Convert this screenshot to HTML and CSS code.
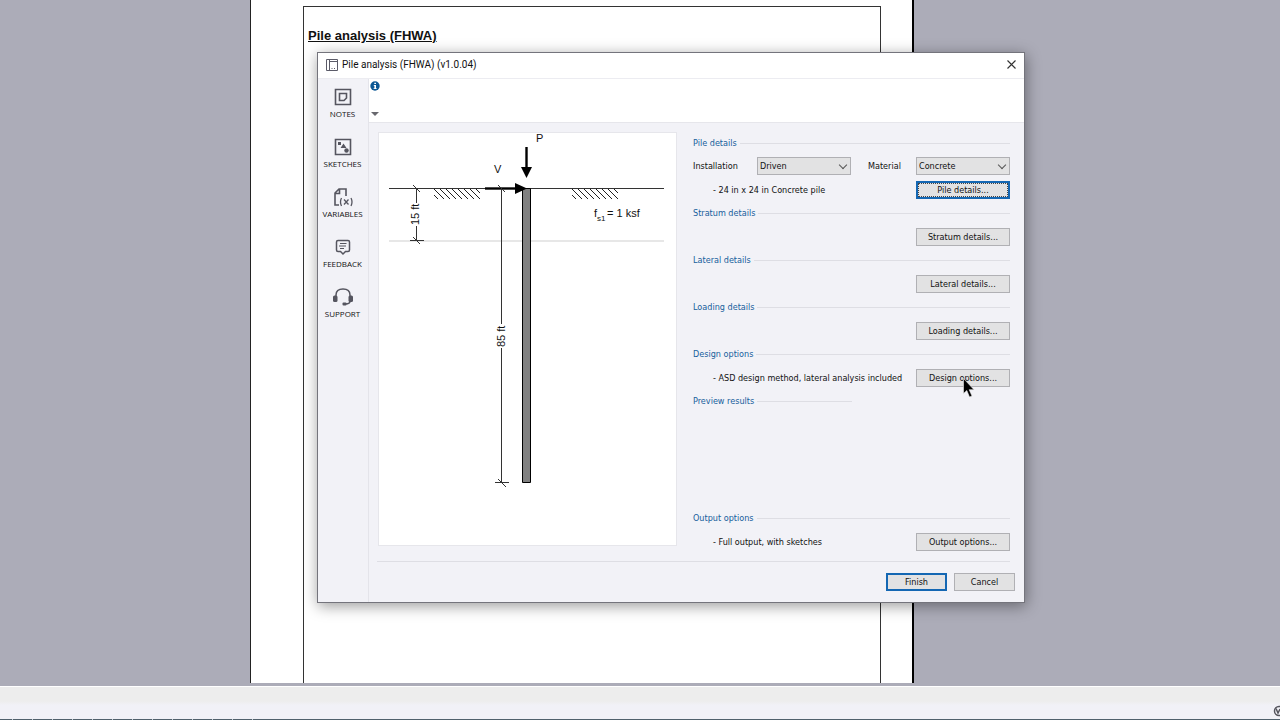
FILE: index.html
```html
<!DOCTYPE html>
<html lang="en">
<head>
<meta charset="utf-8">
<title>Pile analysis (FHWA)</title>
<link rel="stylesheet" href="styles.css">
</head>
<body>
<main class="workspace">
  <article class="paper">
    <div class="frame"><h1 class="paper-title">Pile analysis (FHWA)</h1></div>
  </article>
</main>
<footer class="status">
  <svg class="status-icon" width="7" height="12" viewBox="0 0 7 12"><circle cx="6" cy="6" r="4.5" fill="none" stroke="#55555d" stroke-width="1.5"/><path d="M3 3.500l2 4.500 2-4" fill="none" stroke="#55555d" stroke-width="1.5"/></svg>
  <div class="ticks"></div>
</footer>

<section class="dialog" role="dialog" aria-labelledby="dialog-title">
  <header class="titlebar">
    <svg width="12" height="12" viewBox="0 0 12 12" fill="none" stroke="#5b5b68"><path d="M.5 .5h11v11H.5zM3.500 .5v11M3.500 2.500h8"/><path d="M5.500 9.500h1M8 9.500h1"/></svg>
    <h2 class="title" id="dialog-title">Pile analysis (FHWA) (v1.0.04)</h2>
    <button class="close" aria-label="Close"><svg width="9" height="9" viewBox="0 0 9 9"><path d="M.5 .5l8 8M8.500 .5l-8 8" stroke="#333" stroke-width="1.100"/></svg></button>
  </header>
  <div class="body">
    <nav class="side">
      <button class="tool">
        <svg width="20" height="20" viewBox="0 0 20 20" fill="none" stroke="#55555f" stroke-width="1.600"><path d="M2.500 2.500h15v15h-15z"/><path d="M6.500 6.500h7v4.500l-2.500 2.500H6.500z"/></svg>
        <span>NOTES</span></button>
      <button class="tool">
        <svg width="20" height="20" viewBox="0 0 20 20" fill="none" stroke="#55555f" stroke-width="1.600"><path d="M2.500 2.500h15v15h-15z"/><g fill="#55555f" stroke="none"><path d="M5 5h3v3H5zM10.500 6.500l3 4.500h-6z"/><circle cx="13.500" cy="13.500" r="2.200"/></g></svg>
        <span>SKETCHES</span></button>
      <button class="tool">
        <svg width="20" height="20" viewBox="0 0 20 20" fill="none" stroke="#55555f" stroke-width="1.600"><path d="M6 18H2V6l4-4h7v7M6.500 2v4.500H2"/><path stroke-width="1.300" d="M8.500 11Q6.500 15 8.500 19M18 11Q20 15 18 19M11 12.500l4.500 5M15.500 12.500l-4.500 5"/></svg>
        <span>VARIABLES</span></button>
      <button class="tool">
        <svg width="20" height="20" viewBox="0 0 20 20" fill="none" stroke="#55555f" stroke-width="1.500"><path d="M5 3.500h10q1.500 0 1.500 1.500v8q0 1.500-1.500 1.500h-2.500L10 17l-2.500-2.500H5q-1.500 0-1.500-1.500V5q0-1.500 1.500-1.500z"/><path stroke-width="1.200" d="M7 6.500h6.500M6 9h7M7 11.500h4"/></svg>
        <span>FEEDBACK</span></button>
      <button class="tool">
        <svg width="20" height="20" viewBox="0 0 20 20" fill="none" stroke="#55555f" stroke-width="1.500"><path d="M3 10V8q0-6 7-6t7 6v2M17 14q0 3-4.500 3"/><g fill="#55555f" stroke="none"><rect x="0" y="8.500" width="4.500" height="6.500" rx="1.500"/><rect x="15.500" y="8.500" width="4.500" height="6.500" rx="1.500"/><rect x="9.500" y="15.500" width="4" height="3" rx="1"/></g></svg>
        <span>SUPPORT</span></button>
    </nav>
    <div class="main">
      <div class="info">
        <svg width="10" height="10" viewBox="0 0 10 10"><circle cx="5" cy="5" r="4.700" fill="#0b5794"/><path d="M4.300 1.800h1.700v1.300H4.300zM3.800 4h2.200v3.200h.700v.9H3.600v-.9h.8V4.900h-.6z" fill="#fff"/></svg>
        <svg width="10" height="4" viewBox="0 0 10 4"><path d="M1 0h8L5 4z" fill="#68686e"/></svg>
      </div>
      <div class="content">
        <div class="sketch">
          <svg class="drawing" viewBox="378 132 299 414" preserveAspectRatio="xMidYMin meet" role="img" aria-label="Pile sketch">
            <defs><path id="hatch" d="M0 6l4 4M0 0l10 10M6 0l10 10M12 0l10 10M18 0l10 10M24 0l10 10M30 0l10 10M36 0l10 10M42 0l4 4" fill="none" stroke="#222"/></defs>
            <path d="M389 241h275" stroke="#cfcfcf"/>
            <path d="M389 188.500h275" stroke="#333"/>
            <use href="#hatch" x="434" y="189"/><use href="#hatch" x="572" y="189"/>
            <path d="M522.500 188.500h8v294h-8z" fill="#808080" stroke="#000"/>
            <path d="M485 188.500h32" stroke="#000" stroke-width="2.400"/><path d="M515 183l12 5.500-12 5.500z"/>
            <path d="M526.500 147v22" stroke="#000" stroke-width="2.400"/><path d="M521 167h11l-5.500 11z"/>
            <path d="M501.500 189v135M501.500 348v135M495 482.500h14M498 479l8 8M498 185l7 7M416.500 189v14M416.500 226v15M410 240.500h14M413 237l7 7M413 185l7 7" fill="none" stroke="#333"/>
            <g class="drawing-text">
              <text x="536" y="142">P</text><text x="494" y="173">V</text>
              <text x="594" y="217">f</text><text class="sub" x="597" y="221">s1</text><text x="607" y="217">= 1 ksf</text>
              <text transform="translate(419 225) rotate(-90)">15 ft</text>
              <text transform="translate(505 347) rotate(-90)">85 ft</text>
            </g>
          </svg>
        </div>
        <form class="form">
          <section class="group">
            <h3 class="head">Pile details</h3>
            <div class="row fields">
              <label class="field-label" for="installation">Installation</label>
              <span class="pick"><select id="installation"><option>Driven</option></select></span>
              <label class="field-label material" for="material">Material</label>
              <span class="pick"><select id="material"><option>Concrete</option></select></span>
            </div>
            <div class="row short"><p class="note">- 24 in x 24 in Concrete pile</p><button type="button" class="btn wide focused">Pile details...</button></div>
          </section>
          <section class="group">
            <h3 class="head">Stratum details</h3>
            <div class="row"><button type="button" class="btn wide">Stratum details...</button></div>
          </section>
          <section class="group">
            <h3 class="head">Lateral details</h3>
            <div class="row"><button type="button" class="btn wide">Lateral details...</button></div>
          </section>
          <section class="group">
            <h3 class="head">Loading details</h3>
            <div class="row"><button type="button" class="btn wide">Loading details...</button></div>
          </section>
          <section class="group">
            <h3 class="head">Design options</h3>
            <div class="row"><p class="note">- ASD design method, lateral analysis included</p><button type="button" class="btn wide">Design options...</button></div>
          </section>
          <section class="group preview">
            <h3 class="head half">Preview results</h3>
          </section>
          <section class="group">
            <h3 class="head">Output options</h3>
            <div class="row"><p class="note">- Full output, with sketches</p><button type="button" class="btn wide">Output options...</button></div>
          </section>
        </form>
      </div>
      <footer class="actions">
        <button class="btn default">Finish</button>
        <button class="btn">Cancel</button>
      </footer>
    </div>
  </div>
</section>
<svg class="pointer" width="12" height="20" viewBox="0 0 12 20"><path d="M.5 .5v15l3.300-3 2.700 6.500 2.500-1-2.800-6.300h4.800z" fill="#000" stroke="#e9e9e9" stroke-width=".6"/></svg>
</body>
</html>
```
FILE: styles.css
```css
* { box-sizing: border-box; }

body {
  margin: 0;
  min-height: 100vh;
  display: flex;
  flex-direction: column;
  position: relative;
  overflow: hidden;
  background: #acacb8;
  font: 9px/14px "DejaVu Sans Condensed", "DejaVu Sans", sans-serif;
  font-stretch: condensed;
  color: #111;
}

h1, h2, h3, p { margin: 0; font-weight: normal; }
svg { display: block; flex: none; }
button, select { font: inherit; color: inherit; }

.workspace {
  flex: 1;
  display: flex;
  padding: 0 366px 3px 250px;
}

.paper {
  flex: 1;
  display: flex;
  padding: 6px 31px 0 52px;
  background: #fff;
  border-left: 1px solid #222;
  border-right: 2px solid #000;
}

.frame {
  flex: 1;
  padding: 20px 4px;
  border: 1px solid #333;
  border-bottom: 0;
}

.paper-title {
  font: bold 13px/18px "Liberation Sans", Arial, sans-serif;
  text-decoration: underline;
  color: #111;
}

.status {
  height: 34px;
  display: flex;
  flex-direction: column;
  justify-content: flex-end;
  align-items: flex-end;
  border-top: 1px solid #fff;
  background: linear-gradient(#ededed 14px, #f1f1f7 18px);
}

.status-icon { margin-bottom: 2px; }

.ticks {
  align-self: stretch;
  height: 1px;
  background: repeating-linear-gradient(90deg, #4f606c 0 12px, #c3cbd1 12px 13px, #4f606c 13px 20px) 0 0 / 260px 1px no-repeat #4f606c;
}

.dialog {
  position: absolute;
  left: 317px;
  right: 255px;
  top: 52px;
  display: flex;
  flex-direction: column;
  min-height: 550px;
  border: 1px solid #74747c;
  background: #f2f2f7;
  box-shadow: 1px 3px 14px rgba(0, 0, 0, .4);
}

.titlebar {
  height: 26px;
  display: flex;
  align-items: center;
  gap: 4px;
  padding: 0 8px 2px;
  border-bottom: 1px solid #ececf1;
  background: #fff;
}

.title { font: 10px/16px Roboto, "Open Sans", sans-serif; flex: 1; }

.close {
  padding: 0;
  border: 0;
  background: none;
}

.body { flex: 1; display: flex; }

.side {
  width: 51px;
  display: flex;
  flex-direction: column;
  gap: 16px;
  padding: 8px 1px 0 0;
  border-right: 1px solid #e4e4ea;
}

.tool {
  display: flex;
  flex-direction: column;
  align-items: center;
  padding: 0;
  border: 0;
  background: none;
  font: 8px/14px "Open Sans", "Noto Sans", sans-serif;
}

.main { flex: 1; display: flex; flex-direction: column; }

.info {
  height: 44px;
  display: flex;
  flex-direction: column;
  justify-content: space-between;
  padding: 2px 1px 6px;
  border-bottom: 1px solid #e6e6eb;
  background: #fff;
}

.content {
  flex: 1;
  display: flex;
  gap: 16px;
  margin: 0 14px 0 8px;
  padding: 9px 0 4px 1px;
  border-bottom: 1px solid #dedee4;
}

.sketch {
  flex: 1;
  display: flex;
  margin-bottom: 11px;
  border: 1px solid #e6e6eb;
  background: #fff;
}

.drawing { flex: 1; width: 100%; margin: -1px; }
.drawing-text { font: 11px "Liberation Sans", Arial, sans-serif; fill: #111; }
.sub { font-size: 8px; }

.form {
  width: 317px;
  display: flex;
  flex-direction: column;
  padding-top: 3px;
}

.preview { flex: 1; }

.head {
  display: flex;
  align-items: center;
  gap: 3px;
  font-size: 9px;
  line-height: 16px;
  color: #17609c;
}

.head::after {
  content: "";
  flex: 1;
  height: 1px;
  background: #dedee4;
}

.half { width: 50%; }

.row {
  display: flex;
  align-items: center;
  justify-content: flex-end;
  height: 31px;
}

.short { height: 30px; }
.fields { height: 24px; align-items: flex-end; }
.field-label { line-height: 18px; flex: 1; }
.material { flex: none; width: 65px; padding-left: 17px; }
.note { flex: 1; padding-left: 20px; }

.pick { display: flex; position: relative; }

.pick::after {
  content: "";
  position: absolute;
  right: 5px;
  top: 5px;
  width: 5px;
  height: 5px;
  border: solid #555;
  border-width: 0 1px 1px 0;
  transform: rotate(45deg);
  pointer-events: none;
}

select {
  appearance: none;
  width: 94px;
  height: 18px;
  padding: 0 2px;
  border: 1px solid #b0b0b4;
  border-radius: 0;
  background: #e2e2e3;
}

.btn {
  width: 61px;
  height: 18px;
  padding: 0;
  border: 1px solid #b0b0b4;
  background: #e2e2e3;
}

.wide { width: 94px; }
.default, .focused { border: 2px solid #1467b3; }
.focused { outline: 1px dotted #444; outline-offset: -3px; }

.actions {
  height: 40px;
  display: flex;
  align-items: center;
  justify-content: flex-end;
  gap: 7px;
  padding-right: 9px;
}

.pointer {
  position: absolute;
  left: 963px;
  top: 378px;
}
```
